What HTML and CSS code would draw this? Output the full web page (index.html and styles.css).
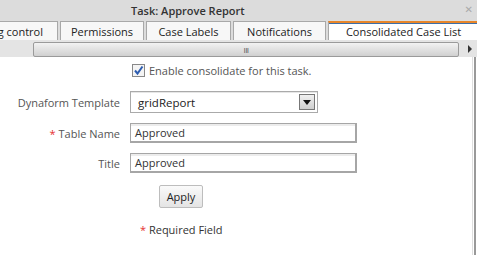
FILE: index.html
```html
<!DOCTYPE html>
<html>
<head>
<meta charset="utf-8">
<link rel="stylesheet" href="styles.css">
</head>
<body>
<div class="window">
  <div class="titlebar">
    <span class="title">Task: Approve Report</span>
    <span class="close">&#x2715;</span>
  </div>
  <div class="tabstrip">
    <div class="tabs">
      <div class="tab tab-timing">Timing control</div>
      <div class="tab tab-perm">Permissions</div>
      <div class="tab tab-labels">Case Labels</div>
      <div class="tab tab-notif">Notifications</div>
      <div class="tab tab-active">Consolidated Case List</div>
    </div>
  </div>
  <div class="scrollrow">
    <div class="thumb"><span class="grip">III</span></div>
    <svg class="arrow" width="6" height="8" viewBox="0 0 6 8"><path d="M1 0 L5 4 L1 8 Z" fill="#333"/></svg>
  </div>
  <div class="content">
    <div class="form">
      <div class="row row-check">
        <span class="label"></span>
        <label class="check">
          <span class="box"><svg width="11" height="11" viewBox="0 0 11 11"><path d="M2 5.5 L4.5 8.5 L9.5 1.5" stroke="#2d5db0" stroke-width="2" fill="none"/></svg></span>
          <span class="check-text">Enable consolidate for this task.</span>
        </label>
      </div>
      <div class="row row-select">
        <span class="label">Dynaform Template</span>
        <div class="select">
          <span class="select-text">gridReport</span>
          <span class="select-btn"><svg width="8" height="5" viewBox="0 0 8 5"><path d="M0 0 L8 0 L4 5 Z" fill="#111"/></svg></span>
        </div>
      </div>
      <div class="row row-input">
        <span class="label"><span class="req">*</span> Table Name</span>
        <div class="input">Approved</div>
      </div>
      <div class="row row-input row-title">
        <span class="label">Title</span>
        <div class="input">Approved</div>
      </div>
      <div class="row row-apply">
        <span class="label"></span>
        <button class="apply">Apply</button>
      </div>
      <div class="row row-req">
        <span class="label"></span>
        <span class="req-note"><span class="req">*</span> Required Field</span>
      </div>
    </div>
    <div class="vedge"></div>
  </div>
</div>
</body>
</html>
```

FILE: styles.css
```css
html, body {
  margin: 0;
  padding: 0;
}
body {
  width: 477px;
  height: 255px;
  overflow: hidden;
  background: #fff;
  font-family: "Open Sans", "DejaVu Sans", sans-serif;
  font-size: 11px;
  color: #333;
}
.window {
  display: flex;
  flex-direction: column;
  height: 255px;
}
.titlebar {
  height: 20px;
  background: #dcdcdc;
  display: flex;
  align-items: center;
  padding-left: 131px;
  padding-right: 4px;
  box-sizing: border-box;
}
.title {
  color: #333;
  font-size: 11px;
  font-weight: 600;
}
.close {
  margin-left: auto;
  margin-top: -2px;
  color: #aaa;
  font-size: 10px;
  font-weight: bold;
}
.tabstrip {
  height: 20px;
  background: #dcdcdc;
  overflow: hidden;
  padding-top: 1px;
  box-sizing: border-box;
}
.tabs {
  display: flex;
  gap: 2px;
  margin-left: -42px;
  height: 19px;
}
.tab {
  flex: none;
  box-sizing: border-box;
  height: 19px;
  border: 1px solid #a8a8a8;
  border-bottom: none;
  background: #f7f7f7;
  color: #222;
  font-size: 11px;
  line-height: 16px;
  padding-top: 2px;
  text-align: center;
}
.tab-timing { width: 100px; text-align: right; padding-right: 14px; }
.tab-perm { width: 84px; }
.tab-labels { width: 85px; }
.tab-notif { width: 93px; }
.tab-active {
  width: 151px;
  background: #fff;
  border-top: 2px solid #e8862a;
  box-shadow: inset 0 1px 0 #3c6fa8;
  padding-top: 1px;
}
.scrollrow {
  height: 17px;
  background: #e4e4e4;
  display: flex;
  align-items: flex-start;
  box-sizing: border-box;
  padding-top: 2px;
}
.thumb {
  margin-left: 33px;
  width: 426px;
  height: 15px;
  box-sizing: border-box;
  border: 1px solid #9a9a9a;
  border-radius: 2px;
  background: linear-gradient(#f2f2f2, #d0d0d0);
  display: flex;
  justify-content: center;
  align-items: center;
}
.grip {
  font-size: 8px;
  letter-spacing: -0.5px;
  color: #555;
  line-height: 8px;
}
.arrow {
  margin-left: 8px;
  margin-top: 3px;
}
.content {
  flex: 1;
  display: flex;
}
.form {
  flex: 1;
  display: flex;
  flex-direction: column;
}
.row {
  display: grid;
  grid-template-columns: 120px auto;
  column-gap: 10px;
  align-items: center;
}
.label {
  text-align: right;
  color: #555;
  font-size: 11px;
}
.req {
  color: #e53030;
}
.row-check {
  margin-top: 6px;
  height: 14px;
}
.check {
  display: flex;
  align-items: center;
  margin-left: 2px;
}
.box {
  width: 11px;
  height: 11px;
  border: 1px solid #888;
  background: #f4f4f4;
  display: inline-block;
}
.box svg { display: block; }
.check-text {
  margin-left: 4px;
  color: #555;
}
.row-select {
  margin-top: 14px;
  height: 22px;
}
.select {
  width: 188px;
  height: 22px;
  box-sizing: border-box;
  border: 1px solid #aaa;
  box-shadow: inset 0 1px 0 #e6e6e6;
  display: flex;
  align-items: center;
  justify-content: space-between;
}
.select-text {
  margin-left: 7px;
  font-size: 11.5px;
  color: #222;
}
.select-btn {
  width: 16px;
  height: 16px;
  box-sizing: border-box;
  border: 1px solid #777;
  background: linear-gradient(#f0f0f0, #cfcfcf);
  margin-right: 2px;
  display: flex;
  align-items: center;
  justify-content: center;
}
.row-input {
  margin-top: 10px;
  height: 20px;
}
.input {
  width: 227px;
  height: 20px;
  box-sizing: border-box;
  border: 1px solid #a6a6a6;
  border-width: 1px 2px 2px 1px;
  box-shadow: inset 0 2px 0 #ececec;
  padding-left: 4px;
  line-height: 18px;
  font-size: 11px;
  color: #333;
}
.row-apply {
  margin-top: 12px;
  height: 23px;
}
.apply {
  margin-left: 29px;
  width: 44px;
  height: 23px;
  box-sizing: border-box;
  border: 1px solid #bdbdbd;
  border-radius: 2px;
  background: linear-gradient(#fafafa, #e4e4e4);
  font-family: "Open Sans", "DejaVu Sans", sans-serif;
  font-size: 11px;
  color: #222;
  padding: 0;
}
.row-req {
  margin-top: 13px;
  height: 16px;
}
.req-note {
  margin-left: 10px;
  color: #333;
}
.vedge {
  width: 1px;
  margin-right: 1px;
  border-left: 1px solid #dedede;
  border-right: 2px solid #999;
}
```
